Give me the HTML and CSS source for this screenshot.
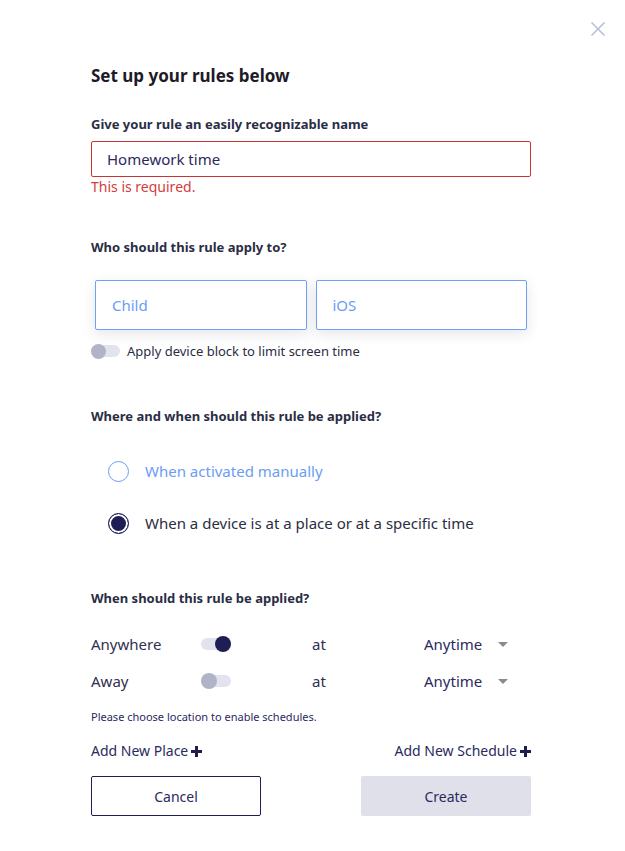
FILE: index.html
```html
<!DOCTYPE html>
<html lang="en">
<head>
    <meta charset="UTF-8">
    <meta name="viewport" content="width=device-width, initial-scale=1.0">
    <title>Set up your rules</title>
    <link rel="stylesheet" href="styles.css">
</head>
<body>
    <div class="modal">
        <button class="close-btn" aria-label="Close">
            <svg width="16" height="16" viewBox="0 0 16 16"><path d="M1.5 1.5 L14.5 14.5 M14.5 1.5 L1.5 14.5" stroke="#b9bfd6" stroke-width="1.6" fill="none"/></svg>
        </button>

        <h1>Set up your rules below</h1>

        <label class="section-label first" for="rule-name">Give your rule an easily recognizable name</label>
        <input type="text" id="rule-name" class="text-input error" value="Homework time">
        <div class="error-text">This is required.</div>

        <div class="section-label who">Who should this rule apply to?</div>
        <div class="pickers">
            <div class="picker">Child</div>
            <div class="picker">iOS</div>
        </div>
        <div class="block-row">
            <span class="toggle small"><span class="knob"></span></span>
            <span>Apply device block to limit screen time</span>
        </div>

        <div class="section-label where">Where and when should this rule be applied?</div>
        <div class="radios">
            <div class="radio-row">
                <span class="radio"></span>
                <span class="radio-text">When activated manually</span>
            </div>
            <div class="radio-row checked">
                <span class="radio"></span>
                <span class="radio-text">When a device is at a place or at a specific time</span>
            </div>
        </div>

        <div class="section-label when">When should this rule be applied?</div>
        <div class="schedule">
            <div class="schedule-row">
                <span>Anywhere</span>
                <span class="toggle on"><span class="knob"></span></span>
                <span>at</span>
                <span class="select">Anytime <span class="caret"></span></span>
            </div>
            <div class="schedule-row">
                <span>Away</span>
                <span class="toggle"><span class="knob"></span></span>
                <span>at</span>
                <span class="select">Anytime <span class="caret"></span></span>
            </div>
        </div>
        <div class="note">Please choose location to enable schedules.</div>

        <div class="add-links">
            <a href="#" class="add-link">Add New Place
                <svg width="11" height="11" viewBox="0 0 11 11"><path d="M4 0h3v4h4v3H7v4H4V7H0V4h4z" fill="#1f1d4f"/></svg>
            </a>
            <a href="#" class="add-link">Add New Schedule
                <svg width="11" height="11" viewBox="0 0 11 11"><path d="M4 0h3v4h4v3H7v4H4V7H0V4h4z" fill="#1f1d4f"/></svg>
            </a>
        </div>

        <div class="actions">
            <button class="btn btn-cancel">Cancel</button>
            <button class="btn btn-create">Create</button>
        </div>
    </div>
</body>
</html>
```

FILE: styles.css
```css
body {
    margin: 0;
    background: #ffffff;
    font-family: "Noto Sans", "Open Sans", sans-serif;
    color: #2b2d42;
}
.modal {
    position: relative;
    width: 440px;
    padding: 64px 94px 36px 91px;
}
.close-btn {
    position: absolute;
    top: 21px;
    right: 19px;
    width: 16px;
    height: 16px;
    padding: 0;
    border: none;
    background: none;
    cursor: pointer;
}
.close-btn svg {
    display: block;
}
h1 {
    margin: 0;
    font-size: 17px;
    line-height: 24px;
    font-weight: 700;
    color: #1e1a28;
}
.section-label {
    display: block;
    font-size: 13px;
    line-height: 18px;
    font-weight: 700;
    color: #2a2d45;
}
.section-label.first {
    margin-top: 27px;
}
.section-label.who {
    margin-top: 41px;
}
.section-label.where {
    margin-top: 46px;
}
.section-label.when {
    margin-top: 51px;
}
.text-input {
    display: block;
    box-sizing: border-box;
    width: 100%;
    height: 36px;
    margin-top: 8px;
    padding: 0 15px;
    border: 1px solid #8a9ab8;
    border-radius: 2px;
    font-family: inherit;
    font-size: 15px;
    color: #2b2a5e;
    outline: none;
}
.text-input.error {
    border-color: #c93535;
}
.error-text {
    font-size: 14px;
    line-height: 20px;
    color: #d53c3c;
}
.pickers {
    display: flex;
    gap: 9px;
    margin-top: 24px;
    padding: 0 4px;
}
.picker {
    flex: 1;
    box-sizing: border-box;
    height: 50px;
    padding: 0 16px;
    display: flex;
    align-items: center;
    border: 1px solid #6fa1f2;
    border-radius: 2px;
    box-shadow: 0 4px 14px rgba(40, 50, 90, 0.12);
    font-size: 15px;
    color: #6a9df4;
}
.block-row {
    display: flex;
    align-items: center;
    gap: 7px;
    margin-top: 11px;
    height: 20px;
    font-size: 13px;
    color: #2b2d42;
}
.toggle {
    position: relative;
    display: inline-block;
    width: 30px;
    height: 12px;
    border-radius: 6px;
    background: #e2e3ee;
}
.toggle .knob {
    position: absolute;
    top: -2px;
    left: 0;
    width: 16px;
    height: 16px;
    border-radius: 50%;
    background: #b1b4c6;
}
.toggle.small {
    width: 29px;
}
.toggle.small .knob {
    width: 15px;
    height: 15px;
    top: -1.5px;
}
.toggle.on .knob {
    left: auto;
    right: 0;
    background: #1f1d55;
}
.radios {
    display: flex;
    flex-direction: column;
    gap: 22px;
    margin-top: 31px;
    padding-left: 17px;
}
.radio-row {
    display: flex;
    align-items: center;
    gap: 16px;
    height: 30px;
    font-size: 15px;
    color: #6a9df4;
}
.radio {
    box-sizing: border-box;
    width: 21px;
    height: 21px;
    border-radius: 50%;
    border: 1px solid #6a9df4;
    background: #fff;
}
.radio-row.checked {
    color: #2b2d42;
}
.radio-row.checked .radio {
    border: 1.5px solid #1f1d55;
    background: #1f1d55;
    box-shadow: inset 0 0 0 2px #fff;
}
.schedule {
    display: flex;
    flex-direction: column;
    gap: 7px;
    margin-top: 22px;
}
.schedule-row {
    display: grid;
    grid-template-columns: 110px 111px 112px 1fr;
    align-items: center;
    height: 30px;
    font-size: 15px;
    color: #2f3050;
}
.select {
    display: flex;
    align-items: center;
    gap: 16px;
    color: #2b2a5e;
}
.caret {
    width: 0;
    height: 0;
    border-left: 5px solid transparent;
    border-right: 5px solid transparent;
    border-top: 5px solid #8a8a94;
}
.note {
    margin-top: 13px;
    font-size: 11px;
    line-height: 16px;
    color: #2b2a5e;
}
.add-links {
    display: flex;
    justify-content: space-between;
    margin-top: 16px;
    line-height: 20px;
}
.add-link {
    display: flex;
    align-items: center;
    gap: 3px;
    font-size: 14px;
    color: #2b2a5e;
    text-decoration: none;
}
.actions {
    display: flex;
    justify-content: space-between;
    margin-top: 15px;
}
.btn {
    width: 170px;
    height: 40px;
    border-radius: 2px;
    font-family: inherit;
    font-size: 14px;
    color: #2b2a5e;
    cursor: pointer;
}
.btn-cancel {
    background: #fff;
    border: 1px solid #1f1d55;
}
.btn-create {
    background: #dfe0ea;
    border: none;
}
```
